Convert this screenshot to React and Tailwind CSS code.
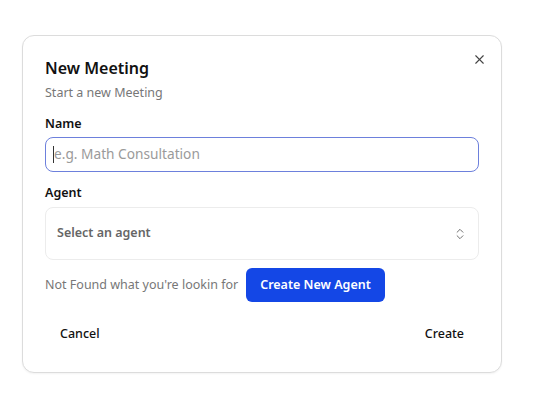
import React from 'react';
import { X, ChevronsUpDown } from 'lucide-react';

const App = () => {
  return (
    <div className="min-h-screen bg-white pt-[35px] pl-[22px]" style={{ fontFamily: '"Noto Sans", "Open Sans", sans-serif' }}>
      <div className="relative w-[480px] rounded-xl border border-[#dcdcdc] bg-white shadow-xs px-[22px] pt-[20px] pb-[21px]">
        <button className="absolute right-[14px] top-[16px] text-[#444]">
          <X size={15} strokeWidth={1.8} />
        </button>

        <h2 className="text-[16px] font-semibold leading-6 text-[#111]">New Meeting</h2>
        <p className="mt-[3px] text-[12.5px] leading-5 text-[#777]">Start a new Meeting</p>

        <label className="mt-[11px] block text-[12.5px] font-semibold leading-5 text-[#111]">Name</label>
        <div className="mt-[3px] flex h-[35px] items-center rounded-lg border border-[#6d80dc] px-[7px]">
          <span className="h-[17px] w-px bg-[#333]" />
          <span className="text-[13.7px] text-[#9a9a9a]">e.g. Math Consultation</span>
        </div>

        <label className="mt-[11px] block text-[12.5px] font-semibold leading-5 text-[#111]">Agent</label>
        <div className="mt-[4px] flex h-[53px] items-center justify-between rounded-lg border border-[#ececec] pl-[11px] pr-[11px]">
          <span className="text-[12.5px] font-semibold text-[#666]">Select an agent</span>
          <ChevronsUpDown size={14} strokeWidth={1.6} className="text-[#666]" />
        </div>

        <div className="mt-[8px] flex items-center gap-[8px]">
          <span className="text-[12.5px] text-[#777]">Not Found what you're lookin for</span>
          <button className="h-[34px] rounded-md bg-[#1447e6] px-[14px] text-[12.5px] font-semibold text-white">
            Create New Agent
          </button>
        </div>

        <div className="mt-[15px] flex items-center justify-between">
          <button className="h-[34px] px-[15px] text-[12.5px] font-medium text-[#111]">Cancel</button>
          <button className="h-[34px] px-[15px] text-[12.5px] font-medium text-[#111]">Create</button>
        </div>
      </div>
    </div>
  );
};

export default App;
